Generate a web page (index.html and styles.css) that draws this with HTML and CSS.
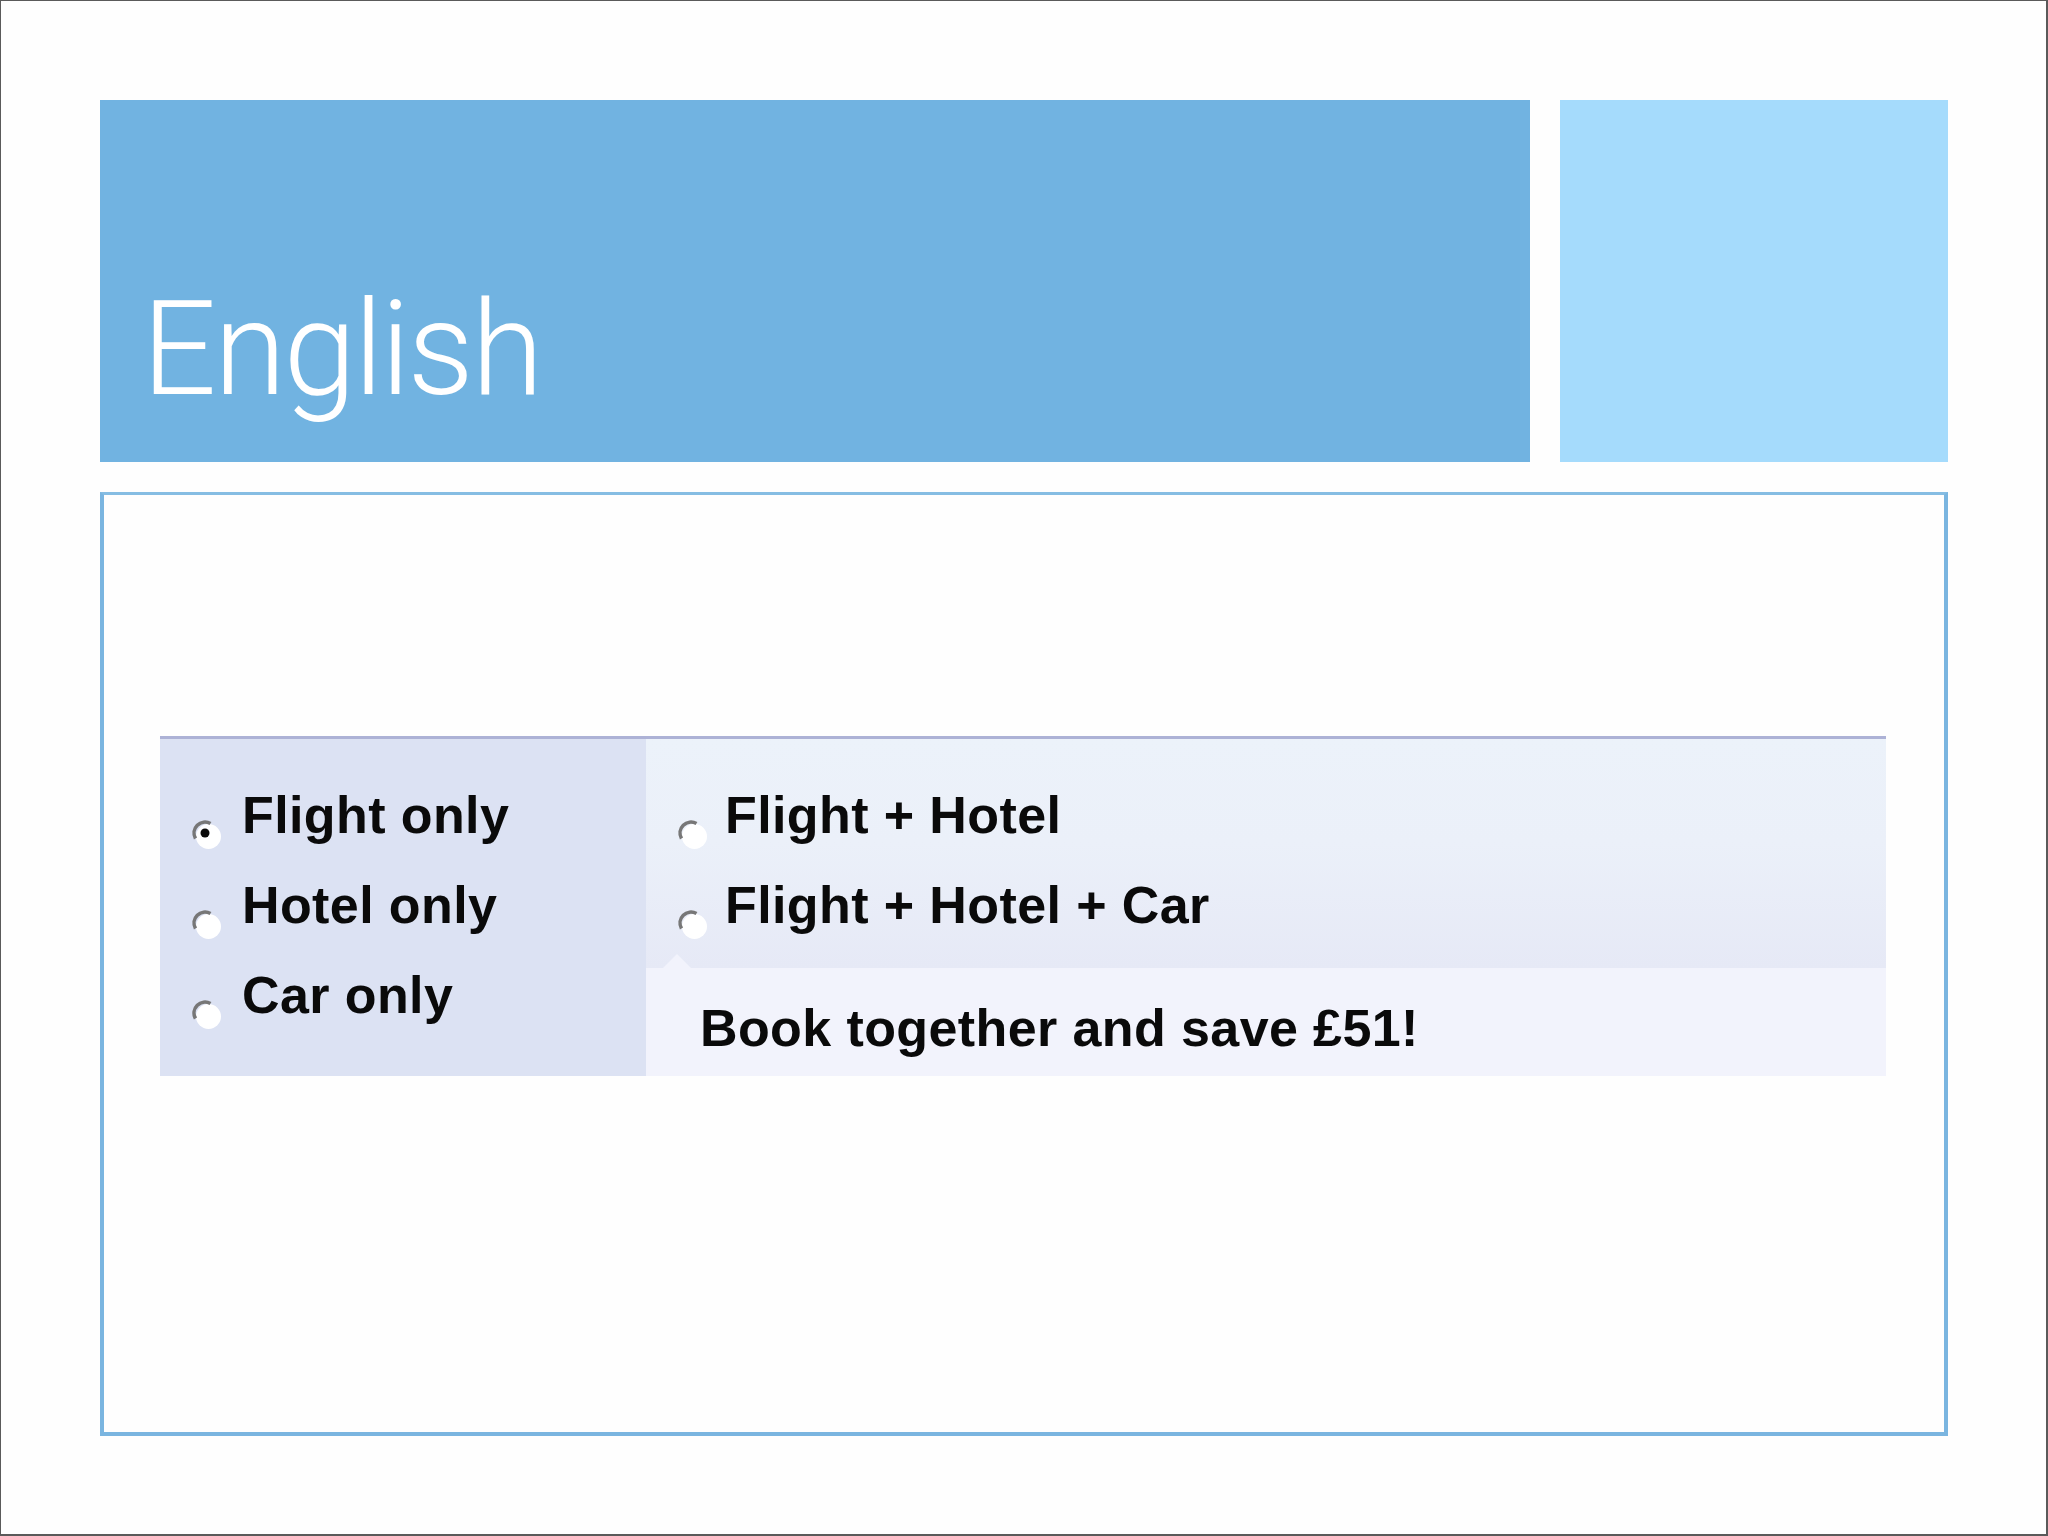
FILE: index.html
```html
<!DOCTYPE html>
<html lang="en">
<head>
<meta charset="utf-8">
<title>English</title>
<link rel="stylesheet" href="styles.css">
</head>
<body>
<div class="page">
  <div class="header-row">
    <div class="title-box"><h1 class="title">English</h1></div>
    <div class="accent-box"></div>
  </div>
  <div class="frame">
    <div class="panel">
      <div class="col-single">
        <div class="opt"><svg class="radio" viewBox="0 0 34 34" width="34" height="34"><circle cx="18.5" cy="19.5" r="12.5" fill="#fff"/><path d="M5.5 21.5 A11 11 0 0 1 20.5 6.5" fill="none" stroke="#777" stroke-width="3.6"/><circle cx="15" cy="16" r="4.5" fill="#0a0a0a"/></svg><span>Flight only</span></div>
        <div class="opt"><svg class="radio" viewBox="0 0 34 34" width="34" height="34"><circle cx="18.5" cy="19.5" r="12.5" fill="#fff"/><path d="M5.5 21.5 A11 11 0 0 1 20.5 6.5" fill="none" stroke="#777" stroke-width="3.6"/></svg><span>Hotel only</span></div>
        <div class="opt"><svg class="radio" viewBox="0 0 34 34" width="34" height="34"><circle cx="18.5" cy="19.5" r="12.5" fill="#fff"/><path d="M5.5 21.5 A11 11 0 0 1 20.5 6.5" fill="none" stroke="#777" stroke-width="3.6"/></svg><span>Car only</span></div>
      </div>
      <div class="col-combo">
        <div class="combo-opts">
          <div class="opt"><svg class="radio" viewBox="0 0 34 34" width="34" height="34"><circle cx="18.5" cy="19.5" r="12.5" fill="#fff"/><path d="M5.5 21.5 A11 11 0 0 1 20.5 6.5" fill="none" stroke="#777" stroke-width="3.6"/></svg><span>Flight + Hotel</span></div>
          <div class="opt"><svg class="radio" viewBox="0 0 34 34" width="34" height="34"><circle cx="18.5" cy="19.5" r="12.5" fill="#fff"/><path d="M5.5 21.5 A11 11 0 0 1 20.5 6.5" fill="none" stroke="#777" stroke-width="3.6"/></svg><span>Flight + Hotel + Car</span></div>
        </div>
        <div class="promo">Book together and save £51!</div>
      </div>
    </div>
  </div>
</div>
</body>
</html>
```
FILE: styles.css
```css
html, body {
  margin: 0;
  padding: 0;
  background: #ffffff;
}

.page {
  width: 2048px;
  height: 1536px;
  box-sizing: border-box;
  border-top: 1px solid #5a5a5a;
  border-left: 1px solid #5a5a5a;
  border-right: 2px solid #5a5a5a;
  border-bottom: 2px solid #5a5a5a;
  padding: 99px 0 0 99px;
  background: #fefefe;
}

.header-row {
  display: flex;
  gap: 30px;
  height: 362px;
}

.title-box {
  width: 1430px;
  background: #71b3e1;
  display: flex;
  flex-direction: column;
  justify-content: flex-end;
  box-sizing: border-box;
  padding: 0 0 48px 42px;
}

.title {
  margin: 0;
  font-family: Roboto, "Liberation Sans", sans-serif;
  font-weight: 300;
  font-size: 131px;
  line-height: 130px;
  letter-spacing: -2.5px;
  color: #ffffff;
}

.accent-box {
  width: 388px;
  background: #a5dbfc;
}

.frame {
  margin-top: 30px;
  width: 1848px;
  height: 944px;
  box-sizing: border-box;
  border: 4px solid #7ab5e0;
  border-top: 3px solid #86bde3;
  padding: 241px 0 0 56px;
}

.panel {
  width: 1726px;
  height: 340px;
  box-sizing: border-box;
  border-top: 3px solid #adb2d6;
  display: flex;
  font-family: "Liberation Sans", Arial, sans-serif;
  font-weight: 700;
  font-size: 52px;
  letter-spacing: 0.4px;
  color: #0a0a0a;
}

.col-single {
  width: 486px;
  background: #dce2f3;
  box-sizing: border-box;
  padding: 31px 0 0 30px;
}

.opt {
  line-height: 90px;
  height: 90px;
  white-space: nowrap;
}

.radio {
  display: inline-block;
  vertical-align: -18px;
  margin-right: 18px;
}

.col-combo {
  flex: 1;
  display: flex;
  flex-direction: column;
}

.combo-opts {
  height: 229px;
  box-sizing: border-box;
  padding: 31px 0 0 30px;
  background: linear-gradient(#ecf2fa 0%, #ebf0f9 45%, #e6e9f6 100%);
}

.combo-opts .radio {
  margin-right: 15px;
}

.promo {
  position: relative;
  flex: 1;
  box-sizing: border-box;
  padding: 12px 0 0 54px;
  line-height: 96px;
  background: #f2f3fc;
  white-space: nowrap;
}

.promo::before {
  content: "";
  position: absolute;
  left: 17px;
  bottom: 100%;
  border-left: 14px solid transparent;
  border-right: 14px solid transparent;
  border-bottom: 14px solid #f2f3fc;
}
```
